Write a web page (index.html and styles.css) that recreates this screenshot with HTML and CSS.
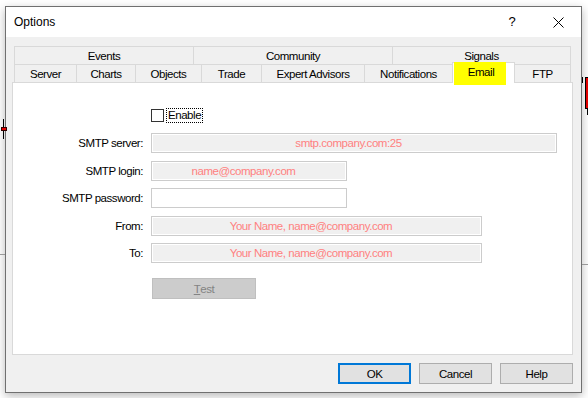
FILE: index.html
```html
<!DOCTYPE html>
<html>
<head>
<meta charset="utf-8">
<title>Options</title>
<link rel="stylesheet" href="styles.css">
</head>
<body>
<div class="window">
  <div class="titlebar">
    <span class="title">Options</span>
    <div class="caption-btns">
      <span class="cap-btn help">?</span>
      <span class="cap-btn close"><svg width="11" height="11" viewBox="0 0 11 11"><path d="M0.5 0.5L10.5 10.5M10.5 0.5L0.5 10.5" stroke="#000" stroke-width="1" fill="none"/></svg></span>
    </div>
  </div>
  <div class="body">
    <div class="tabs">
      <div class="tabrow row1">
        <div class="tab">Events</div>
        <div class="tab">Community</div>
        <div class="tab">Signals</div>
      </div>
      <div class="tabrow row2">
        <div class="tab">Server</div>
        <div class="tab">Charts</div>
        <div class="tab">Objects</div>
        <div class="tab">Trade</div>
        <div class="tab">Expert Advisors</div>
        <div class="tab">Notifications</div>
        <div class="tab selected"><span class="hl"></span><span class="tab-text">Email</span></div>
        <div class="tab">FTP</div>
      </div>
    </div>
    <div class="panel">
      <div class="form">
        <div class="row row-check">
          <span class="label"></span>
          <label class="check"><span class="box"></span><span class="focus">Enable</span></label>
        </div>
        <div class="row">
          <span class="label">SMTP server:</span>
          <div class="field disabled w-wide">smtp.company.com:25</div>
        </div>
        <div class="row">
          <span class="label">SMTP login:</span>
          <div class="field disabled w-short">name@company.com</div>
        </div>
        <div class="row">
          <span class="label">SMTP password:</span>
          <div class="field w-short"></div>
        </div>
        <div class="row">
          <span class="label">From:</span>
          <div class="field disabled w-mid">Your Name, name@company.com</div>
        </div>
        <div class="row">
          <span class="label">To:</span>
          <div class="field disabled w-mid">Your Name, name@company.com</div>
        </div>
        <div class="row row-test">
          <span class="label"></span>
          <div class="test-btn"><span class="u">T</span>est</div>
        </div>
      </div>
    </div>
    <div class="buttons">
      <div class="btn default">OK</div>
      <div class="btn">Cancel</div>
      <div class="btn">Help</div>
    </div>
  </div>
</div>
<div class="deco mark-v"></div>
<div class="deco mark-red"></div>
<div class="deco hline-left"></div>
<div class="deco tick-right"></div>
<div class="deco candle"></div>
<div class="deco wick"></div>
<div class="deco hline-right"></div>
</body>
</html>
```
FILE: styles.css
```css
html, body {
  margin: 0;
  padding: 0;
}
body {
  position: relative;
  width: 588px;
  height: 398px;
  box-sizing: border-box;
  padding: 6px 0 0 5px;
  overflow: hidden;
  background: #ffffff;
  font-family: "Liberation Sans", Arial, sans-serif;
  color: #000;
}
.window {
  width: 577px;
  height: 387px;
  box-sizing: border-box;
  border: 1px solid #707070;
  background: #f0f0f0;
  box-shadow: 0 3px 9px rgba(0, 0, 0, 0.28);
  display: flex;
  flex-direction: column;
}
.titlebar {
  flex: none;
  height: 30px;
  background: #fff;
  display: flex;
  align-items: center;
}
.title {
  padding-left: 8px;
  font-size: 12px;
}
.caption-btns {
  margin-left: auto;
  display: flex;
  height: 100%;
}
.cap-btn {
  width: 46px;
  display: flex;
  align-items: center;
  justify-content: center;
}
.help {
  font-size: 13px;
  padding-bottom: 1px;
}
.close svg {
  display: block;
}
.body {
  flex: 1;
  display: flex;
  flex-direction: column;
  padding: 9px 8px 8px 6px;
  font-size: 11.5px;
  letter-spacing: -0.45px;
}
.tabs {
  margin: 0 2px;
}
.tabrow {
  display: grid;
  height: 18px;
}
.row1 {
  grid-template-columns: 179px 199px 179px;
}
.row2 {
  grid-template-columns: 62px 59px 66px 60px 103px 88px 62px 57px;
}
.tab {
  box-sizing: border-box;
  border-top: 1px solid #d9d9d9;
  border-left: 1px solid #d9d9d9;
  display: flex;
  align-items: center;
  justify-content: center;
  white-space: nowrap;
}
.tab:last-child {
  border-right: 1px solid #d9d9d9;
}
.tab.selected {
  position: relative;
  z-index: 1;
  margin: -2px -1px -1px 0;
  background: #fff;
  border-right: 1px solid #d9d9d9;
  padding: 0 5px 3px 0;
}
.hl {
  position: absolute;
  left: 1px;
  top: -1px;
  width: 52px;
  height: 23px;
  background: #ffff00;
}
.tab-text {
  position: relative;
}
.panel {
  flex: none;
  height: 273px;
  box-sizing: border-box;
  border: 1px solid #d9d9d9;
  background: #fff;
}
.form {
  display: flex;
  flex-direction: column;
  padding-top: 25px;
}
.row {
  display: grid;
  grid-template-columns: 130px auto;
  column-gap: 8px;
  align-items: center;
  justify-items: start;
}
.row + .row {
  margin-top: 7.5px;
}
.row-check + .row {
  margin-top: 10px;
}
.row + .row-test {
  margin-top: 15px;
}
.label {
  justify-self: end;
  white-space: nowrap;
}
.check {
  display: flex;
  align-items: center;
  gap: 2px;
}
.box {
  width: 13px;
  height: 13px;
  box-sizing: border-box;
  border: 1px solid #333;
  background: #fff;
}
.focus {
  height: 15px;
  box-sizing: border-box;
  border: 1px dotted #000;
  padding: 0 1px;
  line-height: 13px;
}
.field {
  height: 20px;
  box-sizing: border-box;
  border: 1px solid #cccccc;
  background: #fff;
  display: flex;
  align-items: center;
  justify-content: center;
  padding-right: 11px;
  color: #ff8080;
  white-space: nowrap;
}
.field.disabled {
  background: #f0f0f0;
  box-shadow: inset 0 0 0 1px #fff;
}
.w-wide {
  width: 406px;
}
.w-short {
  width: 196px;
}
.w-mid {
  width: 331px;
}
.test-btn {
  margin-left: 1px;
  width: 104px;
  height: 21px;
  box-sizing: border-box;
  border: 1px solid #bfbfbf;
  background: #cccccc;
  color: #838383;
  display: flex;
  align-items: center;
  justify-content: center;
}
.u {
  text-decoration: underline;
}
.buttons {
  flex: none;
  display: flex;
  justify-content: flex-end;
  gap: 8px;
  margin-top: 8px;
}
.btn {
  width: 73px;
  height: 21px;
  box-sizing: border-box;
  border: 1px solid #adadad;
  background: #e1e1e1;
  display: flex;
  align-items: center;
  justify-content: center;
}
.btn.default {
  border: 2px solid #0078d7;
}
.deco {
  position: absolute;
}
.mark-v {
  left: 3px;
  top: 119px;
  width: 1px;
  height: 20px;
  background: #000;
}
.mark-red {
  left: 1px;
  top: 127px;
  width: 4px;
  height: 2px;
  background: #e00000;
  border: 1px solid #300;
}
.hline-left {
  left: 0;
  top: 254px;
  width: 5px;
  height: 1px;
  background: #999;
}
.tick-right {
  left: 582px;
  top: 77px;
  width: 1px;
  height: 6px;
  background: #000;
}
.candle {
  left: 585px;
  top: 77px;
  width: 6px;
  height: 30px;
  background: #e00000;
  border: 1px solid #000;
}
.wick {
  left: 587px;
  top: 109px;
  width: 1px;
  height: 6px;
  background: #000;
}
.hline-right {
  left: 582px;
  top: 264px;
  width: 6px;
  height: 1px;
  background: #999;
}
```
